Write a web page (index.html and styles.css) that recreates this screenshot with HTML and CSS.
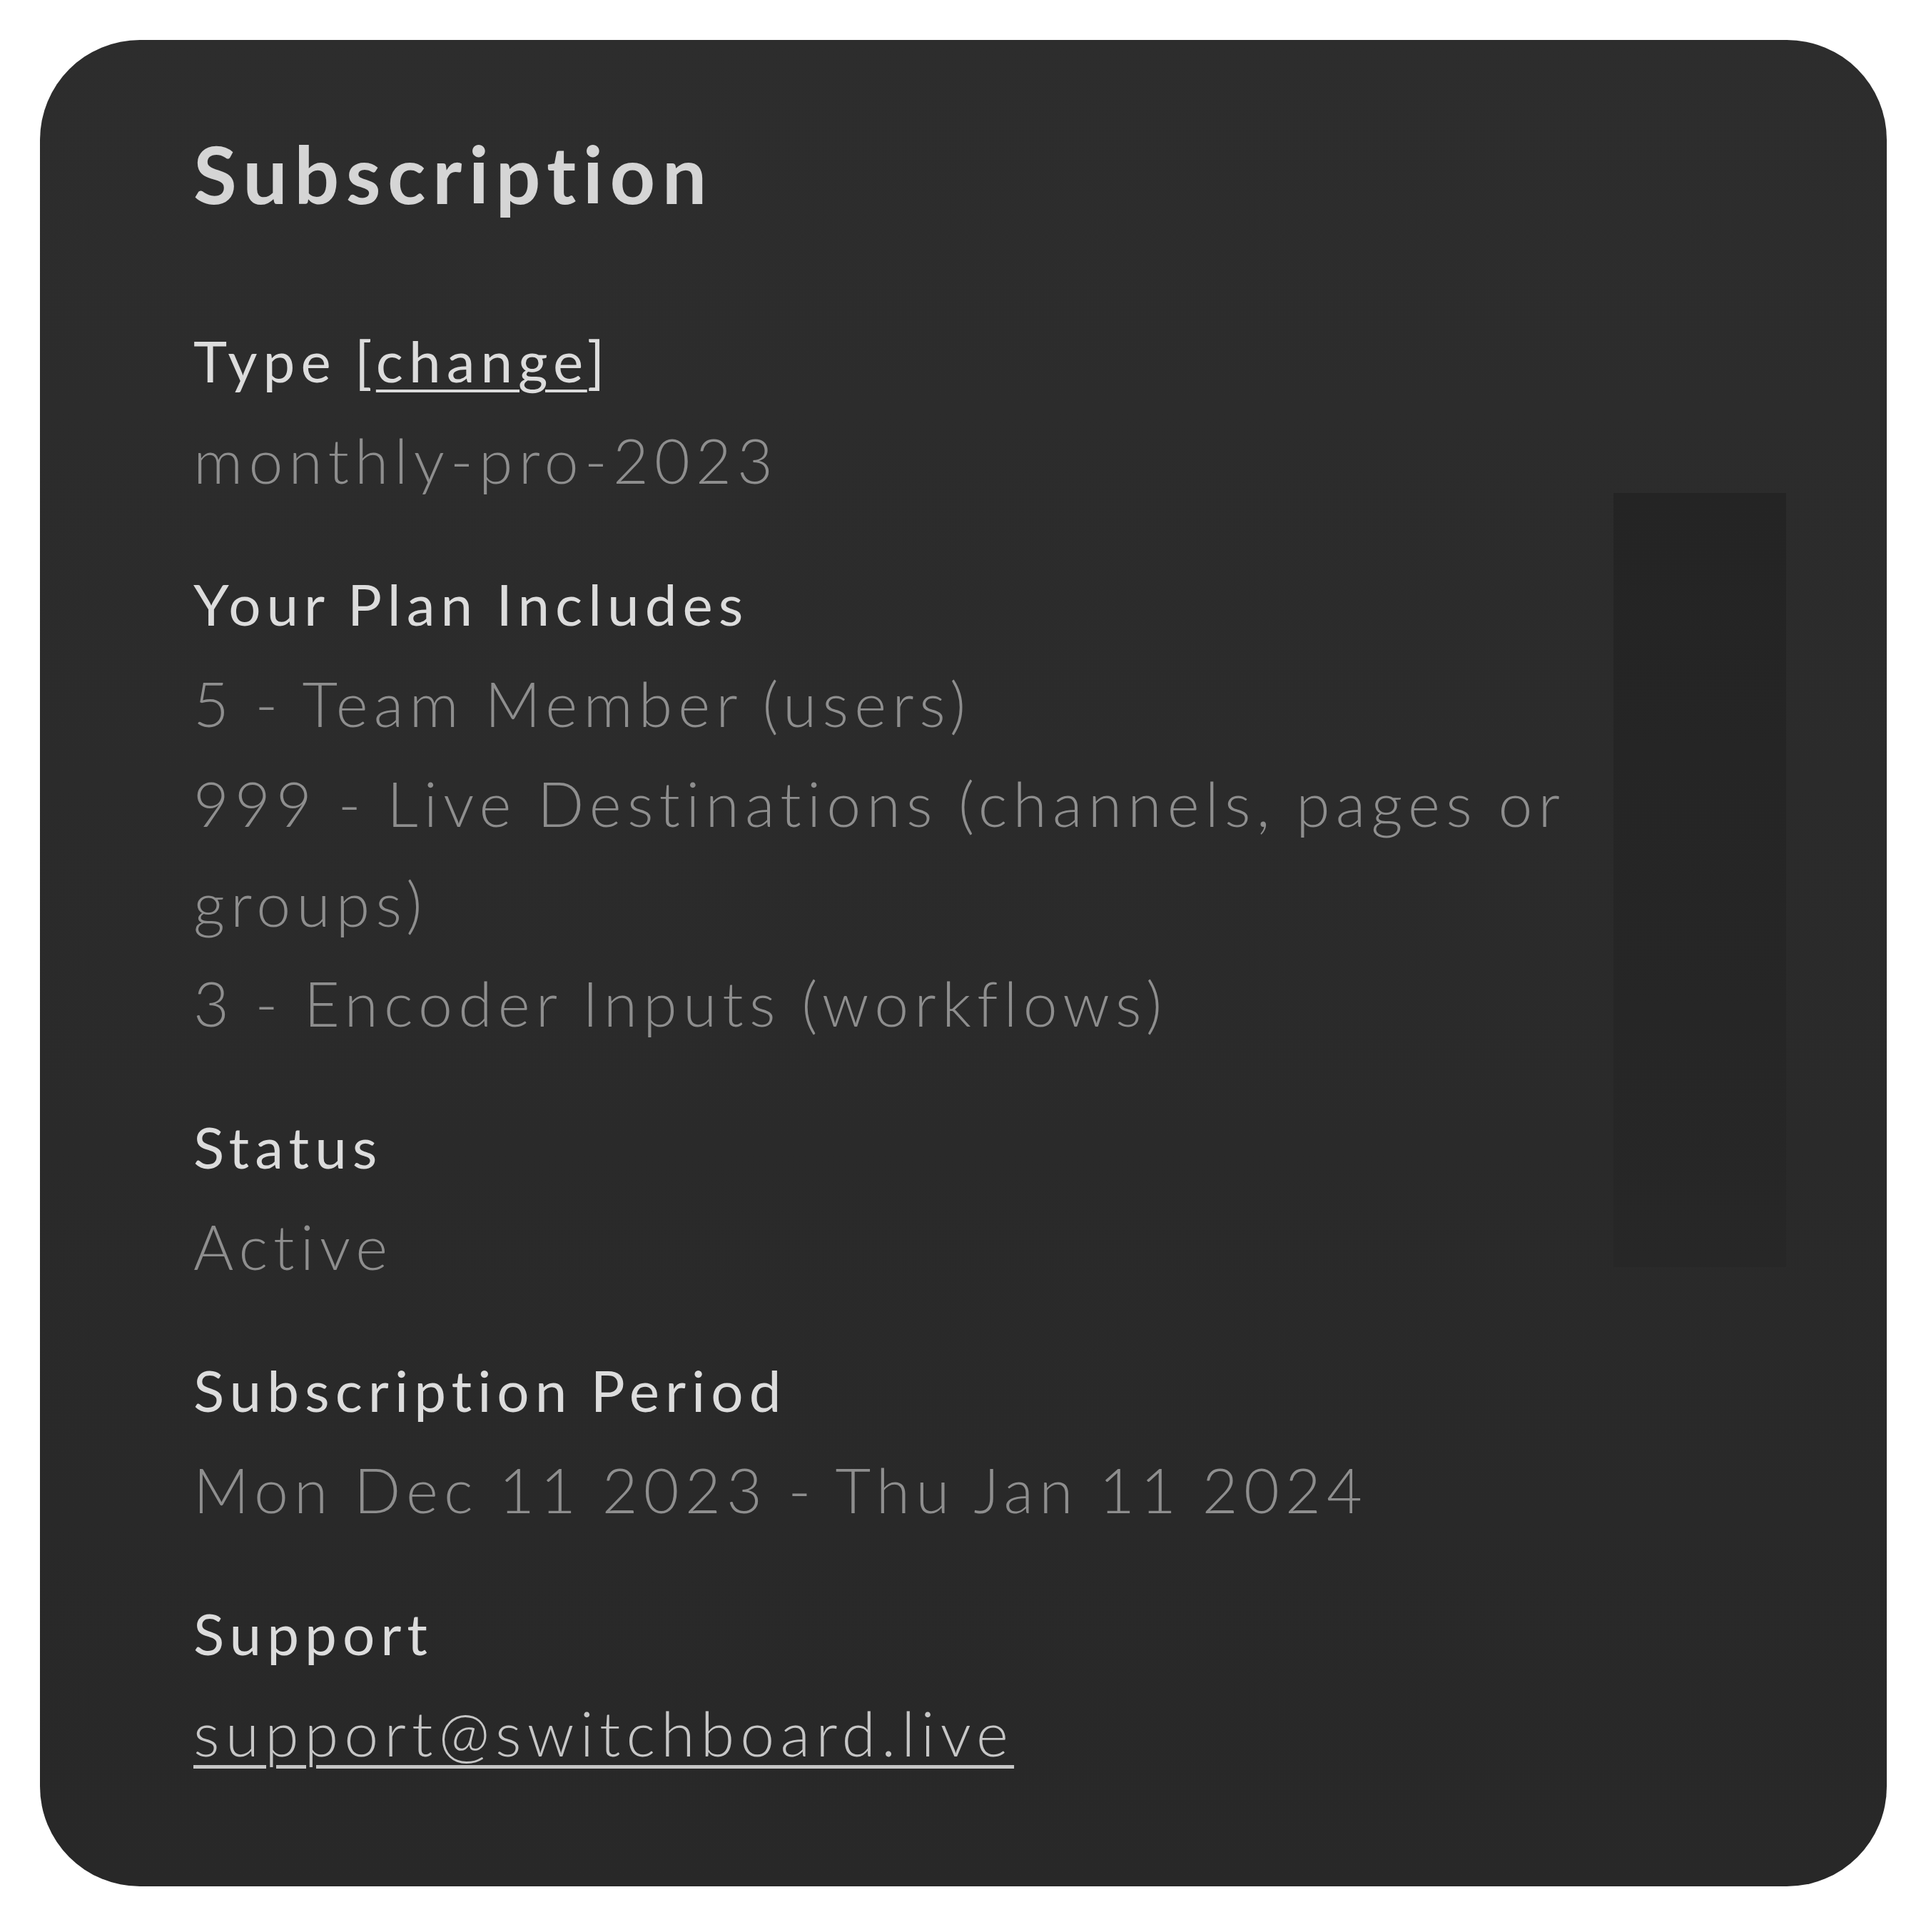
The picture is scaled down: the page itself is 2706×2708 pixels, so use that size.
FILE: index.html
```html
<!DOCTYPE html>
<html lang="en">
  <head>
    <meta charset="UTF-8" />
    <meta name="viewport" content="width=device-width, initial-scale=1" />
    <title>Subscription</title>
    <link rel="stylesheet" href="styles.css">
  </head>
  <body>
    <main class="page">
      <section class="card">
        <div class="details">
          <h1 class="title">Subscription</h1>

          <div class="field">
            <h2 class="label">Type [<a href="#" class="label-link">change</a>]</h2>
            <p class="value">monthly-pro-2023</p>
          </div>

          <div class="field">
            <h2 class="label">Your Plan Includes</h2>
            <p class="value">5 - Team Member (users)</p>
            <p class="value">999 - Live Destinations (channels, pages or groups)</p>
            <p class="value">3 - Encoder Inputs (workflows)</p>
          </div>

          <div class="field">
            <h2 class="label">Status</h2>
            <p class="value">Active</p>
          </div>

          <div class="field">
            <h2 class="label">Subscription Period</h2>
            <p class="value">Mon Dec 11 2023 - Thu Jan 11 2024</p>
          </div>

          <div class="field">
            <h2 class="label">Support</h2>
            <p class="value"><a href="mailto:support@switchboard.live" class="mail">support@switchboard.live</a></p>
          </div>
        </div>
        <div class="side"></div>
      </section>
    </main>
  </body>
</html>
```

FILE: styles.css
```css
body {
  font-family: Lato, "Open Sans", sans-serif;
  margin: 0;
  padding: 0;
  background-color: #ffffff;
}

.page {
  padding: 56px 0 0 56px;
}

.card {
  width: 2588px;
  height: 2588px;
  box-sizing: border-box;
  padding: 121px 141px 142px 215px;
  border-radius: 140px;
  background: linear-gradient(#2d2d2d, #282828);
  display: grid;
  grid-template-columns: 1978px 242px;
  column-gap: 12px;
  align-items: start;
}

.details {
  display: flex;
  flex-direction: column;
}

.title {
  margin: 0 0 125px;
  font-size: 111px;
  line-height: 133px;
  font-weight: 700;
  letter-spacing: 0.085em;
  color: #d5d5d5;
}

.field {
  margin-bottom: 61px;
}

.field:last-child {
  margin-bottom: 0;
}

.label {
  margin: 0;
  font-size: 80px;
  line-height: 140px;
  font-weight: 400;
  letter-spacing: 0.1em;
  word-spacing: -3px;
  color: #dcdcdc;
}

.label-link {
  color: inherit;
  text-decoration: underline;
  text-decoration-thickness: 4px;
  text-underline-offset: 10px;
}

.value {
  margin: 0;
  font-size: 86px;
  line-height: 140px;
  font-weight: 300;
  letter-spacing: 0.095em;
  word-spacing: -3px;
  color: #8e8e8e;
}

.mail {
  color: #c6c6c6;
  text-decoration: underline;
  text-decoration-thickness: 5px;
  text-underline-offset: 12px;
}

.side {
  margin-top: 514px;
  height: 1085px;
  background: linear-gradient(#242424, #272727);
}
```
